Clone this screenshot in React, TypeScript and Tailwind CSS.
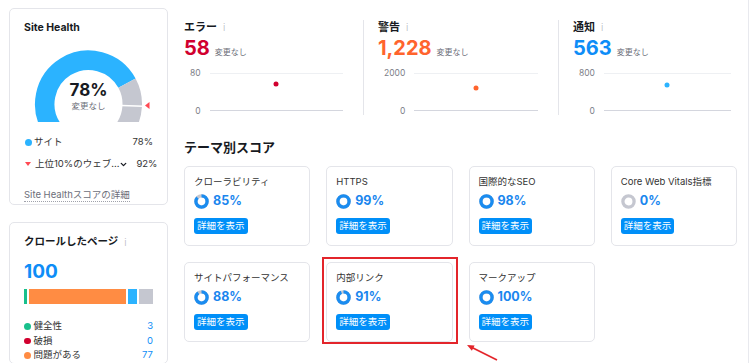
import { ChevronDown } from 'lucide-react'

const stats = [
  { title: 'エラー', value: '58', n: 58, max: 80, num: 'text-[#d1002f]', dot: 'bg-[#d1002f]', col: 'w-[179px] pr-[20px]' },
  { title: '警告', value: '1,228', n: 1228, max: 2000, num: 'text-[#ff642d]', dot: 'bg-[#ff642d]', col: 'w-[195px] border-l border-[#e4e5ea] pl-[14px] pr-[20px]' },
  { title: '通知', value: '563', n: 563, max: 800, num: 'text-[#0e8df7]', dot: 'bg-[#2bb3ff]', col: 'flex-1 border-l border-[#e4e5ea] pl-[14px] pr-[17px]' },
]

const themes = [
  { name: 'クローラビリティ', p: 85 },
  { name: 'HTTPS', p: 99 },
  { name: '国際的なSEO', p: 98 },
  { name: 'Core Web Vitals指標', p: 0 },
  { name: 'サイトパフォーマンス', p: 88 },
  { name: '内部リンク', p: 91, marked: true },
  { name: 'マークアップ', p: 100 },
]

const crawled = [
  { label: '健全性', value: 3, dot: 'bg-[#18c08c]' },
  { label: '破損', value: 0, dot: 'bg-[#d1002f]' },
  { label: '問題がある', value: 77, dot: 'bg-[#ff8c43]' },
]

// gauge geometry (svg coords)
const cx = 64.5
const cy = 55
const pt = (a: number, r: number) => [cx + r * Math.cos((a * Math.PI) / 180), cy - r * Math.sin((a * Math.PI) / 180)]
const arc = (a0: number, a1: number, r = 43.75) => {
  const [x0, y0] = pt(a0, r)
  const [x1, y1] = pt(a1, r)
  return `M${x0} ${y0} A${r} ${r} 0 ${a0 - a1 > 180 ? 1 : 0} 1 ${x1} ${y1}`
}
const angleOf = (p: number) => 200 - p * 220

function Gauge() {
  const split = angleOf(0.78)
  const mark = angleOf(0.92)
  const [mx0, my0] = pt(mark, 33)
  const [mx1, my1] = pt(mark, 55)
  return (
    <div className="relative mt-[14px] h-[74px] w-[129px]">
      <svg width="129" height="74" viewBox="0 0 129 74">
        <defs>
          <clipPath id="gclip">
            <rect x="0" y="0" width="129" height="73" />
          </clipPath>
        </defs>
        <g clipPath="url(#gclip)" fill="none" strokeWidth="19.5">
          <path d={arc(215, split)} stroke="#2bb3ff" />
          <path d={arc(split, -35)} stroke="#c5c7d0" />
          <line x1={mx0} y1={my0} x2={mx1} y2={my1} stroke="#fff" strokeWidth="1.5" />
        </g>
        <polygon points="121,56.5 125.5,53 125.5,60" fill="#ff4953" />
      </svg>
      <div className="absolute left-0 top-[31px] flex w-[129px] flex-col items-center">
        <span className="text-[17px] font-bold leading-[20px] text-[#171a22]">78%</span>
        <span className="text-[8.5px] leading-[12px] text-[#6c6e79]">変更なし</span>
      </div>
    </div>
  )
}

function Ring({ p }: { p: number }) {
  const r = 5.6
  const c = 2 * Math.PI * r
  return (
    <svg width="15" height="15" viewBox="0 0 15 15" className="shrink-0">
      <circle cx="7.5" cy="7.5" r={r} fill="none" stroke="#c5c7d0" strokeWidth="3.3" />
      {p > 0 && (
        <circle
          cx="7.5"
          cy="7.5"
          r={r}
          fill="none"
          stroke="#1a8cf0"
          strokeWidth="3.3"
          strokeDasharray={`${(p / 100) * c} ${c}`}
          transform="rotate(-90 7.5 7.5)"
        />
      )}
    </svg>
  )
}

export default function App() {
  return (
    <div className="flex h-[363px] w-[750px] overflow-hidden bg-white font-['Inter','Noto_Sans_CJK_JP',sans-serif] text-[#171a22]">
      {/* Left column */}
      <aside className="ml-[9px] mt-[8px] flex w-[159px] shrink-0 flex-col gap-[17px]">
        <div className="h-[197px] rounded-[5px] border border-[#e4e5ea] px-[14px] pt-[12px]">
          <div className="text-[10.5px] font-bold leading-[14px]">Site Health</div>
          <Gauge />
          <div className="mt-[12px] flex items-center justify-between text-[9.5px] leading-[14px] text-[#333]">
            <span className="flex items-center gap-[2px]">
              <span className="ml-[1px] h-[7px] w-[7px] rounded-full bg-[#2bb3ff]" />
              サイト
            </span>
            <span>78%</span>
          </div>
          <div className="mt-[8px] flex items-center justify-between whitespace-nowrap text-[9.5px] leading-[14px] text-[#333]">
            <span className="flex items-center gap-[4px]">
              <span className="ml-[1px] h-0 w-0 border-x-[3.5px] border-t-[4.5px] border-x-transparent border-t-[#ff4953]" />
              上位10%のウェブ...
            </span>
            <span className="flex items-center gap-[8px]">
              <ChevronDown size={9} strokeWidth={3.5} className="text-[#171a22]" />
              92%
            </span>
          </div>
          <div className="mt-[9px]">
            <span className="inline-block whitespace-nowrap border-b border-dotted border-[#a0a2ab] text-[9.5px] leading-[13px] text-[#6c6e79]">
              Site Healthスコアの詳細
            </span>
          </div>
        </div>

        <div className="h-[200px] rounded-[5px] border border-[#e4e5ea] px-[14px] pt-[12px]">
          <div className="flex items-center gap-[6px] text-[10.5px] font-bold leading-[14px]">
            クロールしたページ
            <span className="text-[10px] font-light text-[#b5b7c0]">i</span>
          </div>
          <div className="mt-[12px] text-[19px] font-bold leading-[22px] text-[#0e8df7]">100</div>
          <div className="mt-[6px] flex h-[15px] gap-[1.5px]">
            <div className="w-[3px] bg-[#18c08c]" />
            <div className="w-[97.5px] bg-[#ff8c43]" />
            <div className="w-[9.5px] bg-[#2bb3ff]" />
            <div className="flex-1 bg-[#c5c7d0]" />
          </div>
          <div className="mt-[15px] flex flex-col">
            {crawled.map((c) => (
              <div key={c.label} className="flex items-center justify-between text-[9.5px] leading-[14.5px] text-[#333]">
                <span className="flex items-center gap-[3px]">
                  <span className={`h-[6.5px] w-[6.5px] rounded-full ${c.dot}`} />
                  {c.label}
                </span>
                <span className="text-[#0e8df7]">{c.value}</span>
              </div>
            ))}
          </div>
        </div>
      </aside>

      {/* Main */}
      <main className="ml-[16px] h-full w-[565px] shrink-0 border-r border-[#e8e9ee]">
        <div className="mt-[20px] flex h-[95px]">
          {stats.map((s) => (
            <div key={s.title} className={s.col}>
              <div className="flex items-center gap-[6px] text-[11px] font-bold leading-[14px]">
                {s.title}
                <span className="text-[10px] font-light text-[#b5b7c0]">i</span>
              </div>
              <div className="mt-[3px] flex h-[22px] items-baseline gap-[5px]">
                <span className={`text-[20px] font-bold leading-[22px] ${s.num}`}>{s.value}</span>
                <span className="text-[8px] text-[#6c6e79]">変更なし</span>
              </div>
              <div className="mt-[14px] flex h-[38px]">
                <div className="-my-[5px] flex flex-col items-end justify-between pl-[6px] text-[8.5px] leading-[10px] text-[#7c7e88]">
                  <span>{s.max}</span>
                  <span>0</span>
                </div>
                <div className="relative ml-[9px] flex-1 border-y border-b-[#d4d6de] border-t-[#eef0f3]">
                  <span
                    className={`absolute h-[5px] w-[5px] -translate-x-1/2 -translate-y-1/2 rounded-full ${s.dot}`}
                    style={{ left: '50%', top: `${(1 - s.n / s.max) * 36}px` }}
                  />
                </div>
              </div>
            </div>
          ))}
        </div>

        <h2 className="mt-[22px] text-[13px] font-bold leading-[20px]">テーマ別スコア</h2>

        <div className="relative mt-[9px] grid w-[553px] grid-cols-4 gap-[16px]">
          {themes.map((t) => (
            <div key={t.name} className="relative">
              <div className="h-[80px] rounded-[5px] border border-[#e4e5ea] px-[9px] pt-[8px]">
                <div className="text-[9.5px] leading-[14px] text-[#333]">{t.name}</div>
                <div className="mt-[3px] flex h-[18px] items-center gap-[4px]">
                  <Ring p={t.p} />
                  <span className="text-[12.5px] font-bold leading-none text-[#1a86ee]">{t.p}%</span>
                </div>
                <button className="mt-[8px] h-[16px] rounded-[3px] bg-[#008ff8] px-[3px] text-[9.5px] leading-[16px] text-white">
                  詳細を表示
                </button>
              </div>
              {t.marked && (
                <span className="pointer-events-none absolute -bottom-[2px] -left-[4px] -right-[5px] -top-[5px] border-2 border-[#e3252b]" />
              )}
            </div>
          ))}
          <svg className="absolute left-[280px] top-[174px]" width="40" height="28" viewBox="0 0 40 28">
            <line x1="33" y1="20" x2="8" y2="7.5" stroke="#e3252b" strokeWidth="1.6" />
            <polygon points="3,5 10.6,5.45 7.9,10.8" fill="#e3252b" />
          </svg>
        </div>
      </main>
    </div>
  )
}
